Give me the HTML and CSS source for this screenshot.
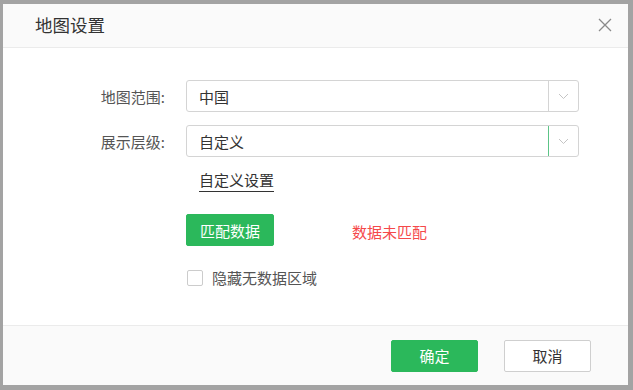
FILE: index.html
```html
<!DOCTYPE html>
<html lang="zh-CN">
<head>
  <meta charset="UTF-8">
  <meta name="viewport" content="width=device-width, initial-scale=1.0">
  <title>地图设置</title>
  <link rel="stylesheet" href="styles.css">
</head>
<body>
<div class="dialog">
  <div class="dialog-header">
    <span class="dialog-title">地图设置</span>
    <span class="close-btn">
      <svg width="14" height="14" viewBox="0 0 14 14">
        <path d="M1 1 L13 13 M13 1 L1 13" stroke="#8a8a8a" stroke-width="1.3" fill="none"/>
      </svg>
    </span>
  </div>

  <div class="dialog-body">
    <div class="form-row">
      <label class="form-label">地图范围:</label>
      <div class="select">
        <span class="select-value">中国</span>
        <span class="select-arrow">
          <svg width="11" height="7" viewBox="0 0 11 7"><path d="M1 1 L5.5 5.5 L10 1" stroke="#c4c4c4" stroke-width="1" fill="none"/></svg>
        </span>
      </div>
    </div>

    <div class="form-row">
      <label class="form-label">展示层级:</label>
      <div class="select active">
        <span class="select-value">自定义</span>
        <span class="select-arrow">
          <svg width="11" height="7" viewBox="0 0 11 7"><path d="M1 1 L5.5 5.5 L10 1" stroke="#c4c4c4" stroke-width="1" fill="none"/></svg>
        </span>
      </div>
    </div>

    <div class="form-row">
      <span class="form-label"></span>
      <a href="#" class="custom-link">自定义设置</a>
    </div>

    <div class="form-row match-row">
      <span class="form-label"></span>
      <button class="btn btn-primary">匹配数据</button>
      <span class="match-status">数据未匹配</span>
    </div>

    <div class="form-row">
      <span class="form-label"></span>
      <label class="checkbox">
        <span class="checkbox-box"></span>
        <span>隐藏无数据区域</span>
      </label>
    </div>
  </div>

  <div class="dialog-footer">
    <button class="btn btn-primary">确定</button>
    <button class="btn btn-default">取消</button>
  </div>
</div>
</body>
</html>
```

FILE: styles.css
```css
body {
  margin: 0;
  padding: 4px 5px 5px 3px;
  height: 390px;
  box-sizing: border-box;
  background-color: #a3a3a3;
  font-family: "Noto Sans CJK SC", "Liberation Sans", sans-serif;
  font-size: 15px;
  color: #333;
}

.dialog {
  height: 100%;
  background-color: #fff;
  display: flex;
  flex-direction: column;
}

.dialog-header {
  height: 43px;
  background-color: #fafafa;
  border-bottom: 1px solid #ebebeb;
  display: flex;
  align-items: center;
  justify-content: space-between;
  padding: 0 16px 0 32px;
}

.dialog-title {
  font-size: 17.5px;
  color: #333;
  margin-top: -2px;
}

.close-btn {
  display: flex;
  margin-top: -2px;
}

.dialog-body {
  flex: 1;
  padding-top: 32px;
}

.form-row {
  display: flex;
  align-items: center;
  margin-bottom: 13px;
}

.form-label {
  width: 162px;
  padding-right: 21px;
  text-align: right;
  color: #555;
  flex-shrink: 0;
}

.select {
  width: 393px;
  height: 32px;
  box-sizing: border-box;
  border: 1px solid #d4d4d4;
  border-radius: 3px;
  display: flex;
  align-items: center;
}

.select-value {
  flex: 1;
  padding-left: 12px;
  color: #333;
}

.select-arrow {
  width: 29px;
  height: 100%;
  border-left: 1px solid #d4d4d4;
  display: flex;
  align-items: center;
  justify-content: center;
}

.select.active .select-arrow {
  border-left-color: #5cc487;
}

.custom-link {
  margin-left: 13px;
  color: #333;
  text-decoration: none;
  border-bottom: 1px solid #333;
  line-height: 20px;
  padding-bottom: 1px;
}

.match-row {
  margin-top: 22px;
  margin-bottom: 21px;
}

.btn {
  font-family: inherit;
  font-size: 15px;
  width: 88px;
  height: 32px;
  border-radius: 2px;
  cursor: pointer;
  padding: 0;
}

.btn-primary {
  background-color: #2bb85b;
  border: 1px solid #2bb85b;
  color: #fff;
}

.btn-default {
  background-color: #fff;
  border: 1px solid #cfcfcf;
  color: #333;
}

.match-status {
  margin-left: 78px;
  margin-top: 2px;
  color: #f5494a;
}

.checkbox {
  display: flex;
  align-items: center;
  margin-left: 1px;
  color: #555;
}

.checkbox-box {
  width: 14px;
  height: 14px;
  border: 1px solid #cccccc;
  border-radius: 2px;
  margin-right: 9px;
  background-color: #fff;
}

.dialog-footer {
  height: 60px;
  box-sizing: border-box;
  background-color: #fafafa;
  border-top: 1px solid #ebebeb;
  display: flex;
  align-items: center;
  justify-content: flex-end;
  gap: 26px;
  padding: 0 37px 0 0;
}

.dialog-footer .btn {
  width: 87px;
}
```
